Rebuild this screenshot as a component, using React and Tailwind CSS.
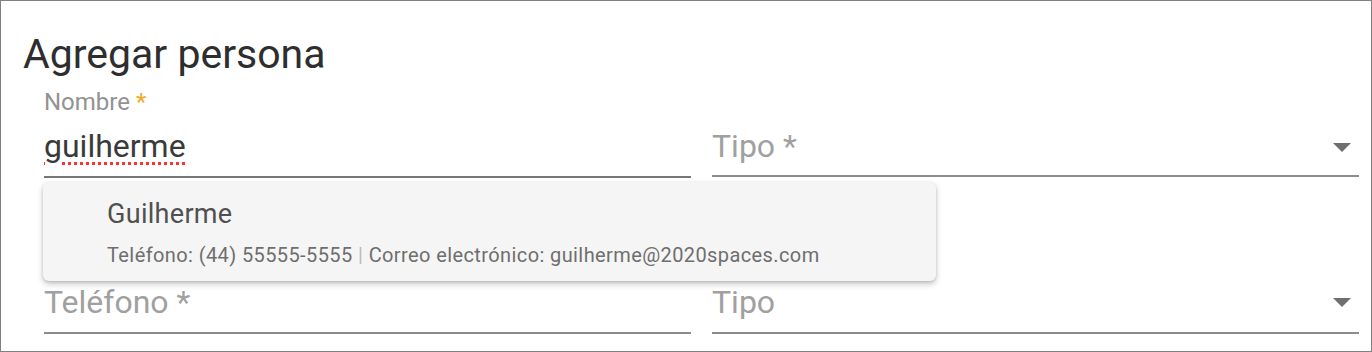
const FIELD_LINE = 'h-[2px] bg-[#8c8c8c]'

function DropArrow({ className = '' }) {
  return (
    <svg viewBox="0 0 18 9" className={`w-[18px] h-[9px] shrink-0 ${className}`} fill="#6f6f6f">
      <path d="M0 0h18L9 9z" />
    </svg>
  )
}

function SelectField({ placeholder, arrowClass = '' }) {
  return (
    <div className="flex flex-col">
      <div className="flex items-center justify-between pr-[8px] pb-[9px]">
        <span className="text-[32px] leading-[40px] text-[#a0a0a0]">{placeholder}</span>
        <DropArrow className={arrowClass} />
      </div>
      <div className={FIELD_LINE} />
    </div>
  )
}

function Suggestion() {
  return (
    <div className="absolute left-[-1px] top-[calc(100%+4px)] w-[893px] h-[99px] rounded-[6px] bg-[#f5f5f5] shadow-[0_3px_6px_rgba(0,0,0,0.22),0_1px_3px_rgba(0,0,0,0.12)] pl-[64px] pt-[17px]">
      <div className="text-[27px] leading-[30px] tracking-[0.3px] text-[#505050]">Guilherme</div>
      <div className="mt-[14px] text-[20px] leading-[24px] tracking-[0.4px] text-[#6e6e6e]">
        Teléfono: (44) 55555-5555 <span className="text-[#bbb]">|</span> Correo electrónico: guilherme@2020spaces.com
      </div>
    </div>
  )
}

export default function App() {
  return (
    <div className="w-[1372px] h-[352px] border border-[#808080] bg-white font-['Roboto','Liberation_Sans',sans-serif] overflow-hidden">
      <h1 className="pl-[22px] pt-[29px] text-[41px] leading-[48px] text-[#2e2e2e]">Agregar persona</h1>

      <div className="grid grid-cols-2 gap-x-[21px] pl-[43px] pr-[12px] mt-[10px]">
        <div className="relative flex flex-col">
          <label className="text-[24px] leading-[28px] text-[#929292]">
            Nombre <span className="text-[#f5a623]">*</span>
          </label>
          <div className="mt-[10px] pb-[10px] text-[32px] leading-[40px] text-[#3a3a3a]">
            <span className="underline decoration-dotted decoration-[#ff3030] decoration-[3px] underline-offset-[5px]">guilherme</span>
          </div>
          <div className="h-[2px] bg-[#777]" />
          <Suggestion />
        </div>
        <div className="flex flex-col pt-[38px]">
          <SelectField placeholder="Tipo *" arrowClass="mt-[3px]" />
        </div>

        <div className="flex flex-col mt-[104px]">
          <div className="pb-[10px] text-[32px] leading-[40px] text-[#a0a0a0]">Teléfono *</div>
          <div className={FIELD_LINE} />
        </div>
        <div className="flex flex-col mt-[104px]">
          <div className="flex items-center justify-between pr-[8px] pb-[10px]">
            <span className="text-[32px] leading-[40px] text-[#a0a0a0]">Tipo</span>
            <DropArrow />
          </div>
          <div className={FIELD_LINE} />
        </div>
      </div>
    </div>
  )
}
